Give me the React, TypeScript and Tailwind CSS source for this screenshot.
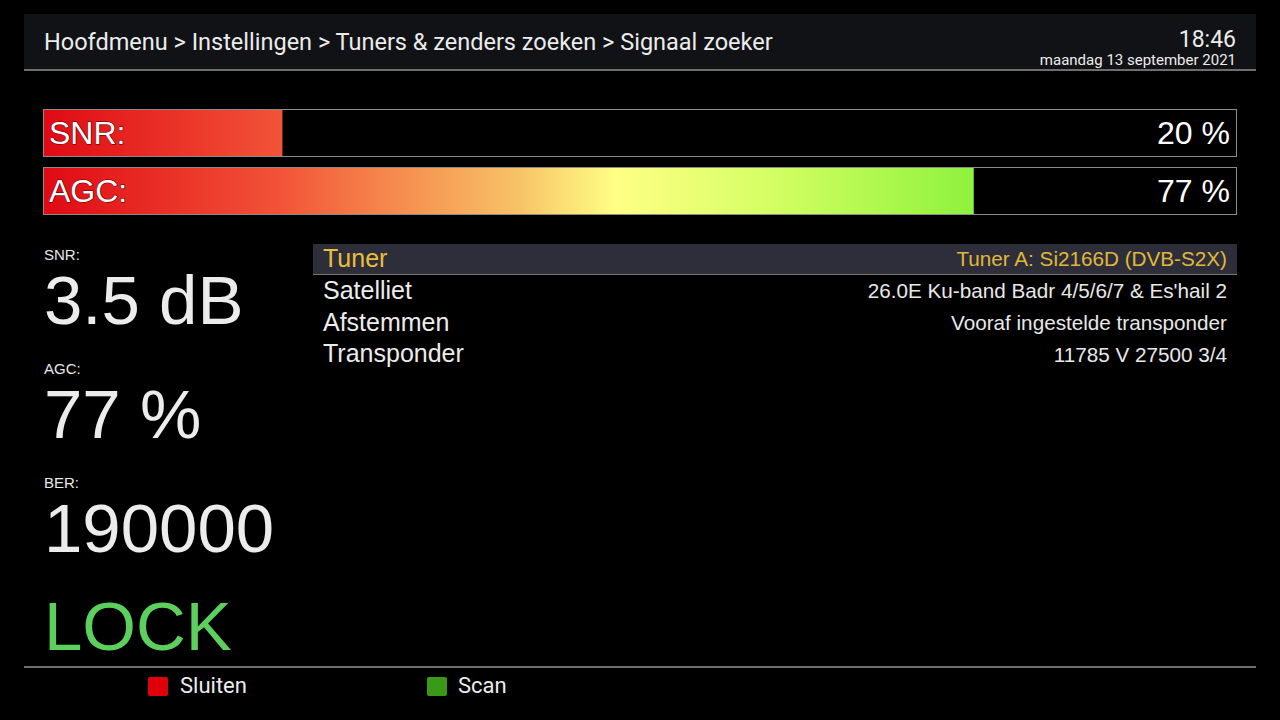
const sans = { fontFamily: '"Liberation Sans", Arial, sans-serif' };
const roboto = { fontFamily: 'Roboto, "Liberation Sans", sans-serif' };

const GRADIENT =
  'linear-gradient(to right, #e00a14 0%, #f25438 20%, #f5834a 28%, #f8c468 40%, #ffff85 48%, #d8ff66 60%, #8ef23c 78%, #50e020 100%)';

const Bar = ({ label, pct, fill }: { label: string; pct: number; fill: number }) => (
  <div className="relative h-[48px] border border-[#8c8c8c] bg-black">
    <div
      className="absolute inset-0"
      style={{ backgroundImage: GRADIENT, clipPath: `inset(0 ${100 - fill}% 0 0)` }}
    />
    <div className="relative flex h-full items-center justify-between pl-[5px] pr-[6px] text-[32px] leading-none text-white">
      <span className="[-webkit-text-stroke:1px_#4a0000] [paint-order:stroke_fill]">{label}</span>
      <span>{pct} %</span>
    </div>
  </div>
);

const Stat = ({ label, value, first }: { label: string; value: string; first?: boolean }) => (
  <div className={first ? '' : 'mt-[26px]'}>
    <div className="text-[15px] leading-none text-[#e8e8e8]">{label}</div>
    <div className="mt-[4px] text-[69px] leading-none text-[#ececec]">{value}</div>
  </div>
);

const rows = [
  { k: 'Satelliet', v: "26.0E Ku-band Badr 4/5/6/7 & Es'hail 2" },
  { k: 'Afstemmen', v: 'Vooraf ingestelde transponder' },
  { k: 'Transponder', v: '11785 V 27500 3/4' },
];

export default function App() {
  return (
    <div className="flex h-[720px] w-[1280px] flex-col overflow-hidden bg-black" style={sans}>
      {/* kop */}
      <div className="mx-[24px] mt-[14px] flex h-[57px] items-start justify-between border-b-2 border-[#6e6e6e] bg-[#111216] pl-[20px] pr-[20px]">
        <div className="mt-[14px] text-[23.5px] leading-[28px] text-[#ececec]" style={roboto}>
          Hoofdmenu &gt; Instellingen &gt; Tuners &amp; zenders zoeken &gt; Signaal zoeker
        </div>
        <div className="mt-[14px] flex flex-col items-end text-[#ececec]" style={roboto}>
          <span className="text-[23px] leading-[24px]">18:46</span>
          <span className="text-[15px] leading-[16px]">maandag 13 september 2021</span>
        </div>
      </div>

      {/* balken */}
      <div className="mx-[43px] mt-[38px] flex flex-col gap-[10px]">
        <Bar label="SNR:" pct={20} fill={20} />
        <Bar label="AGC:" pct={77} fill={78} />
      </div>

      {/* inhoud */}
      <div className="mt-[29px] flex flex-1">
        <div className="ml-[44px] w-[269px] pt-[3px]">
          <Stat label="SNR:" value="3.5 dB" first />
          <Stat label="AGC:" value="77 %" />
          <Stat label="BER:" value="190000" />
          <div className="mt-[29px] text-[69px] leading-none text-[#5ccf5c]">LOCK</div>
        </div>
        <div className="mr-[43px] flex-1">
          <div className="flex h-[31px] items-center justify-between border-b border-[#777] bg-[#2d2e3a] pl-[10px] pr-[10px]">
            <span className="text-[25px] text-[#e8bf3c]">Tuner</span>
            <span className="text-[20.7px] text-[#e0b83a]">Tuner A: Si2166D (DVB-S2X)</span>
          </div>
          {rows.map((r) => (
            <div key={r.k} className="flex h-[31.7px] items-center justify-between pl-[10px] pr-[10px]">
              <span className="text-[25px] text-[#ececec]">{r.k}</span>
              <span className="text-[20.7px] text-[#e8e8e8]">{r.v}</span>
            </div>
          ))}
        </div>
      </div>

      {/* knoppen */}
      <div className="mx-[24px] h-[54px] border-t-2 border-[#6e6e6e]">
        <div className="flex items-center pt-[7px] text-[22px] leading-none text-[#ececec]" style={roboto}>
          <div className="ml-[124px] h-[19px] w-[20px] rounded-[2px] bg-[#e0000a]" />
          <span className="ml-[12px]">Sluiten</span>
          <div className="ml-[180px] h-[19px] w-[20px] rounded-[2px] bg-[#3a9a18]" />
          <span className="ml-[11px]">Scan</span>
        </div>
      </div>
    </div>
  );
}
